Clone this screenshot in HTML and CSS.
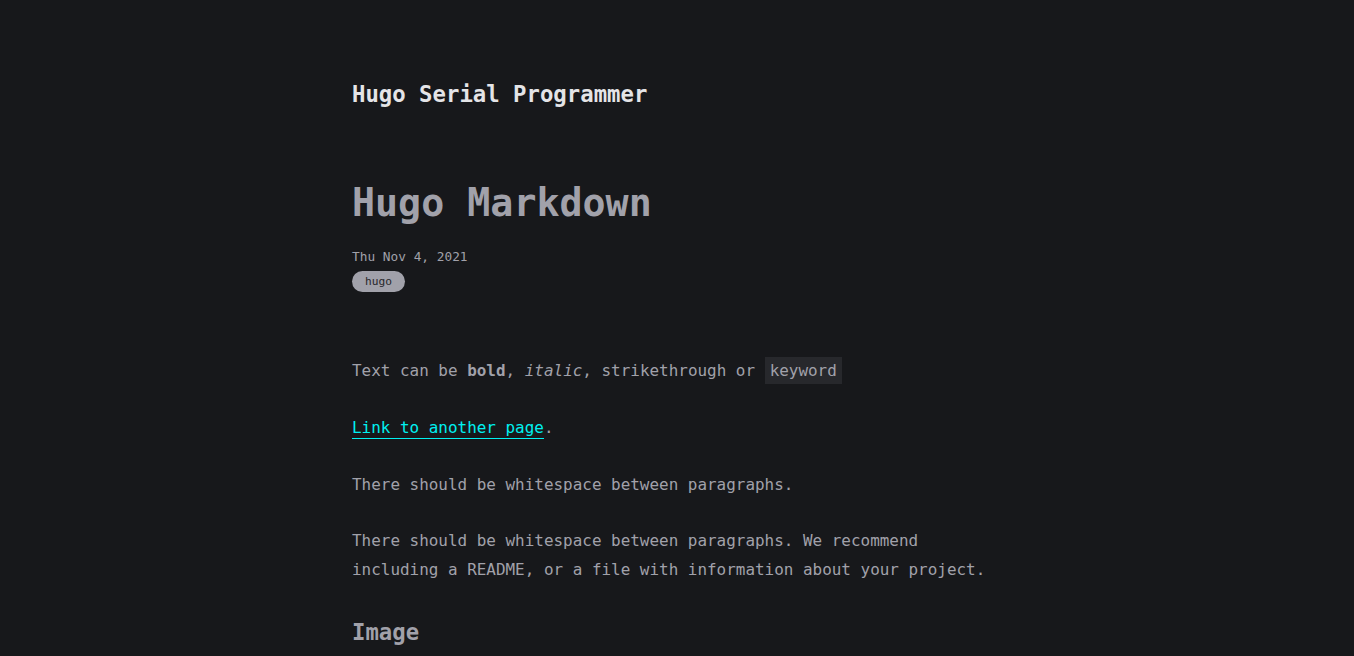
FILE: index.html
```html
<!DOCTYPE html>
<html lang="en">
<head>
<meta charset="utf-8">
<title>Hugo Markdown</title>
<link rel="stylesheet" href="styles.css">
</head>
<body>
<div class="container">
  <header class="site-header">
    <a class="site-title" href="#">Hugo Serial Programmer</a>
  </header>
  <main class="post">
    <h1 class="post-title">Hugo Markdown</h1>
    <div class="post-date">Thu Nov 4, 2021</div>
    <div class="tags"><a class="tag" href="#">hugo</a></div>
    <div class="content">
      <p>Text can be <strong>bold</strong>, <em>italic</em>, strikethrough or <code>keyword</code></p>
      <p><a class="link" href="#">Link to another page</a>.</p>
      <p>There should be whitespace between paragraphs.</p>
      <p>There should be whitespace between paragraphs. We recommend including a README, or a file with information about your project.</p>
      <h2>Image</h2>
    </div>
  </main>
</div>
</body>
</html>
```

FILE: styles.css
```css
html, body {
  margin: 0;
  padding: 0;
  background: #17181b;
}
body {
  font-family: "DejaVu Sans Mono", "Liberation Mono", monospace;
  font-size: 15.95px;
  color: #a1a1aa;
}
.container {
  width: 650px;
  margin: 0 auto;
}
.site-header {
  padding-top: 81px;
}
.site-title {
  display: block;
  font-size: 22.3px;
  line-height: 27px;
  font-weight: bold;
  color: #e4e4e7;
  text-decoration: none;
}
.post-title {
  margin: 72px 0 0;
  font-size: 38.3px;
  line-height: 46px;
  font-weight: bold;
  color: #a1a1aa;
}
.post-date {
  margin-top: 20px;
  font-size: 12.8px;
  line-height: 21px;
  color: #a1a1aa;
}
.tags {
  margin-top: 4px;
  display: flex;
}
.tag {
  display: block;
  background: #a1a1aa;
  color: #27272a;
  font-size: 11.2px;
  line-height: 21px;
  height: 21px;
  padding: 0 13px;
  border-radius: 11px;
  text-decoration: none;
}
.content {
  margin-top: 65px;
}
.content p {
  margin: 0 0 28px;
  line-height: 28.8px;
}
.content strong {
  font-weight: bold;
}
.content code {
  font-family: inherit;
  font-size: 15.95px;
  background: #27282c;
  padding: 4px 5px;
}
.link {
  color: #00f0f0;
  text-decoration: none;
  border-bottom: 1px solid #00f0f0;
  padding-bottom: 1px;
}
.content h2 {
  margin: 30px 0 0;
  font-size: 22.3px;
  line-height: 34px;
  font-weight: bold;
  color: #a1a1aa;
}
```
